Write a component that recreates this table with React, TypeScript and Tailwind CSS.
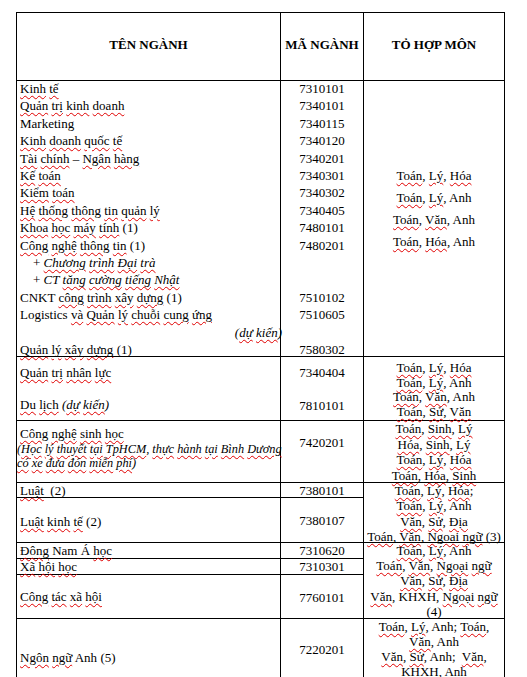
import React from "react";

const NO = new Set(["Marketing", "CNKT", "Logistics", "Anh", "Nam", "Á", "KHXH", "+", "CT", "–"]);

function W({ t }: { t: string }) {
  const parts = t.split(/(\s+)/);
  return (
    <>
      {parts.map((p, i) => {
        if (p === "" || /^\s+$/.test(p)) return <React.Fragment key={i}>{p}</React.Fragment>;
        const m = p.match(/^([(]?)(.*?)([,;)]*)$/);
        const pre = m ? m[1] : "";
        const core = m ? m[2] : p;
        const post = m ? m[3] : "";
        if (!core || NO.has(core) || /^[0-9]+$/.test(core)) return <span key={i}>{p}</span>;
        return (
          <span key={i}>
            {pre}
            <span className="underline decoration-wavy decoration-[#e00000] decoration-1 underline-offset-[2px]">{core}</span>
            {post}
          </span>
        );
      })}
    </>
  );
}

const L = ({ t, className = "" }: { t: string; className?: string }) => (
  <div className={"whitespace-pre " + className}>
    <W t={t} />
  </div>
);

const cell = "border-r border-b border-black overflow-visible relative";

export default function App() {
  const g1c1 = [
    "Kinh tế",
    "Quản trị kinh doanh",
    "Marketing",
    "Kinh doanh quốc tế",
    "Tài chính – Ngân hàng",
    "Kế toán",
    "Kiểm toán",
    "Hệ thống thông tin quản lý",
    "Khoa học máy tính (1)",
    "Công nghệ thông tin (1)",
  ];
  const g1c2 = [
    "7310101",
    "7340101",
    "7340115",
    "7340120",
    "7340201",
    "7340301",
    "7340302",
    "7340405",
    "7480101",
    "7480201",
    "",
    "",
    "7510102",
    "7510605",
    "",
    "7580302",
  ];
  return (
    <div
      className="w-[527px] h-[677px] overflow-hidden bg-white pt-[12px] pl-[16px] text-black text-[13px]"
      style={{ fontFamily: '"Liberation Serif", "Times New Roman", serif' }}
    >
      <div className="grid grid-cols-[264px_83px_141px] grid-rows-[68px_276px_64px_62px_15px_45px_16px_16px_44px_80px] border-l border-t border-black w-max">
        {/* header */}
        <div className={cell + " flex items-center justify-center font-bold pb-[3px]"}>TÊN NGÀNH</div>
        <div className={cell + " flex items-center justify-center font-bold pb-[3px]"}>MÃ NGÀNH</div>
        <div className={cell + " flex items-center justify-center font-bold pb-[3px]"}>TỎ HỢP MÔN</div>

        {/* group 1 */}
        <div className={cell + " pl-[3px] leading-[17.4px]"}>
          <div className="-mt-[1px]">
            {g1c1.map((t) => (
              <L key={t} t={t} />
            ))}
            <div className="whitespace-pre ml-[13px]">
              + <span className="italic"><W t="Chương trình Đại trà" /></span>
            </div>
            <div className="whitespace-pre ml-[13px]">
              + <span className="italic"><W t="CT tăng cường tiếng Nhật" /></span>
            </div>
            <L t="CNKT công trình xây dựng (1)" />
            <L t="Logistics và Quản lý chuỗi cung ứng" />
            <div className="whitespace-pre italic text-right -mr-[2px]">
              <W t="(dự kiến)" />
            </div>
            <L t="Quản lý xây dựng (1)" />
          </div>
        </div>
        <div className={cell + " text-center leading-[17.4px]"}>
          <div className="-mt-[1px]">
            {g1c2.map((t, i) => (
              <div key={i} className="h-[17.4px]">{t}</div>
            ))}
          </div>
        </div>
        <div className={cell + " text-center leading-[22px] pt-[84px]"}>
          <L t="Toán, Lý, Hóa" />
          <L t="Toán, Lý, Anh" />
          <L t="Toán, Văn, Anh" />
          <L t="Toán, Hóa, Anh" />
        </div>

        {/* group 2 */}
        <div className={cell + " pl-[3px] leading-[32px]"}>
          <L t="Quản trị nhân lực" />
          <div className="whitespace-pre">
            <W t="Du lịch" /> <span className="italic"><W t="(dự kiến)" /></span>
          </div>
        </div>
        <div className={cell + " text-center leading-[32.5px]"}>
          <div>7340404</div>
          <div>7810101</div>
        </div>
        <div className={cell + " text-center leading-[14.7px] pt-[4px]"}>
          <L t="Toán, Lý, Hóa" />
          <L t="Toán, Lý, Anh" />
          <L t="Toán, Văn, Anh" />
          <L t="Toán, Sử, Văn" />
        </div>

        {/* group 3 */}
        <div className={cell + " pl-[3px] leading-[14.5px] pt-[6px]"}>
          <L t="Công nghệ sinh học" />
          <L className="italic -ml-[3px] text-[12.3px]" t="(Học lý thuyết tại TpHCM, thực hành tại Bình Dương" />
          <L className="italic -ml-[3px] text-[12.3px]" t="có xe đưa đón miễn phí)" />
        </div>
        <div className={cell + " text-center leading-[16px] pt-[14px]"}>7420201</div>
        <div className={cell + " text-center leading-[15.7px] pt-0"}>
          <L t="Toán, Sinh, Lý" />
          <L t="Hóa, Sinh, Lý" />
          <L t="Toán, Lý, Hóa" />
          <L t="Toán, Hóa, Sinh" />
        </div>

        {/* Luật */}
        <div className={cell + " pl-[3px] leading-[15px]"}>
          <L t="Luật  (2)" />
        </div>
        <div className={cell + " text-center leading-[15px]"}>7380101</div>
        <div className={cell + " row-span-2 text-center leading-[15.3px]"}>
          <L t="Toán, Lý, Hóa;" />
          <L t="Toán, Lý, Anh" />
          <L t="Văn, Sử, Địa" />
          <L t="Toán, Văn, Ngoại ngữ (3)" />
        </div>

        {/* Luật kinh tế */}
        <div className={cell + " pl-[3px] leading-[15px] pt-[16px]"}>
          <L t="Luật kinh tế (2)" />
        </div>
        <div className={cell + " text-center leading-[15px] pt-[15px]"}>7380107</div>

        {/* ĐNA */}
        <div className={cell + " pl-[3px] leading-[16px]"}>
          <L t="Đông Nam Á học" />
        </div>
        <div className={cell + " text-center leading-[16px]"}>7310620</div>
        <div className={cell + " row-span-3 text-center leading-[15.2px]"}>
          <L t="Toán, Lý, Anh" />
          <L t="Toán, Văn, Ngoại ngữ" />
          <L t="Văn, Sử, Địa" />
          <L t="Văn, KHXH, Ngoại ngữ" />
          <L t="(4)" />
        </div>

        {/* XHH */}
        <div className={cell + " pl-[3px] leading-[16px]"}>
          <L t="Xã hội học" />
        </div>
        <div className={cell + " text-center leading-[16px]"}>7310301</div>

        {/* CTXH */}
        <div className={cell + " pl-[3px] leading-[16px] pt-[14px]"}>
          <L t="Công tác xã hội" />
        </div>
        <div className={cell + " text-center leading-[16px] pt-[15px]"}>7760101</div>

        {/* NNA */}
        <div className={cell + " pl-[3px] leading-[16px] pt-[31px]"}>
          <L t="Ngôn ngữ Anh (5)" />
        </div>
        <div className={cell + " text-center leading-[16px] pt-[23px]"}>7220201</div>
        <div className={cell + " text-center leading-[15px]"}>
          <L t="Toán, Lý, Anh; Toán," />
          <L t="Văn, Anh" />
          <L t="Văn, Sử, Anh;  Văn," />
          <L t="KHXH, Anh" />
        </div>
      </div>
    </div>
  );
}
